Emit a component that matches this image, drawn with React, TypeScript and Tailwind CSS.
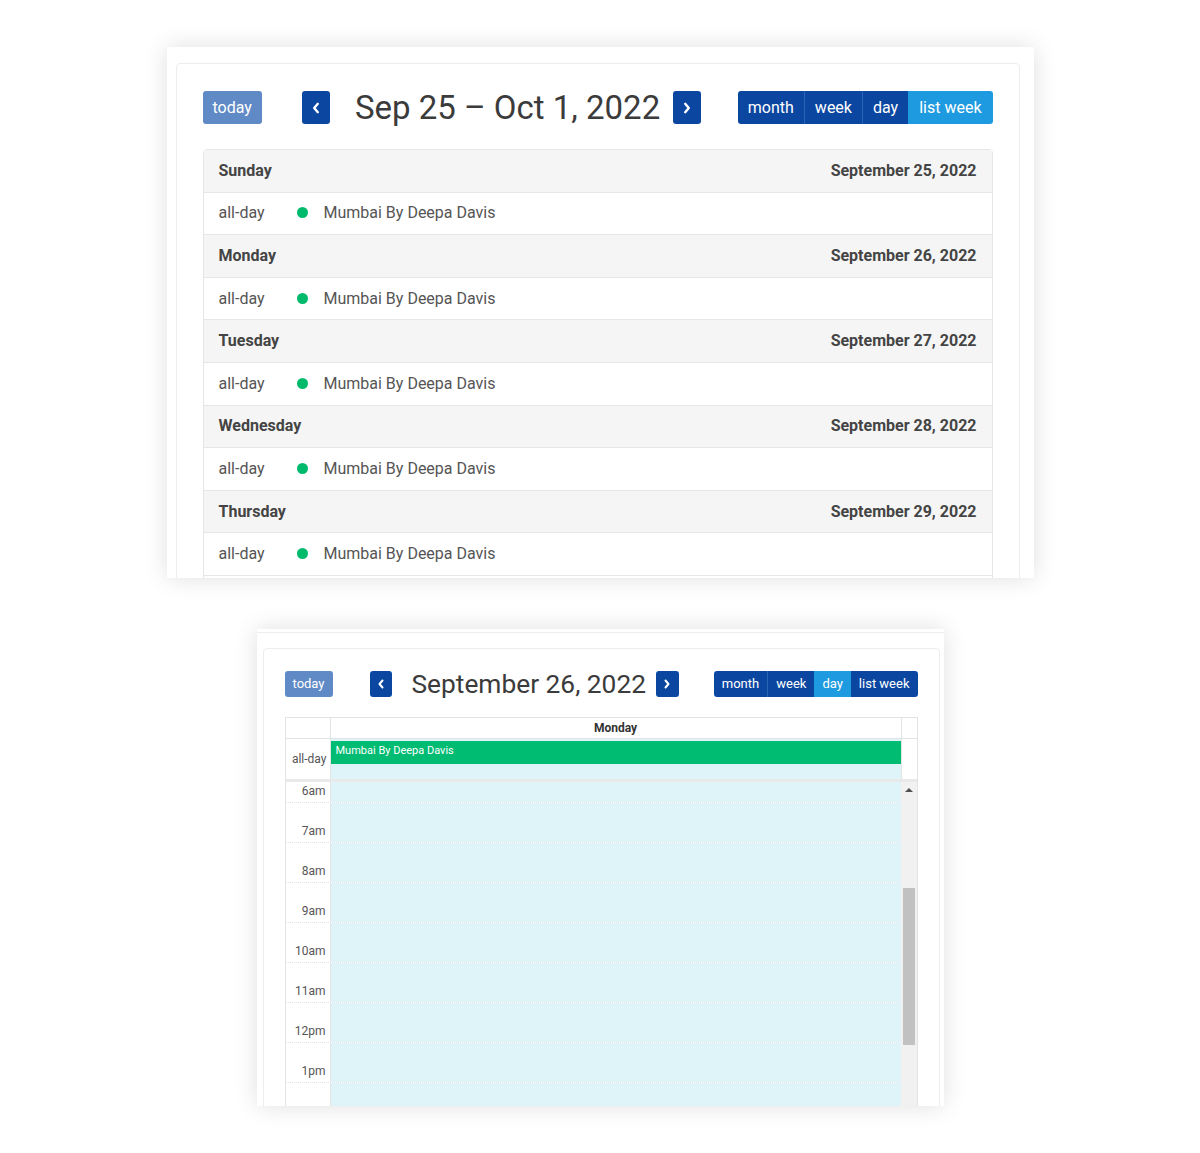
import React from "react";

const days = [
  { name: "Sunday", date: "September 25, 2022" },
  { name: "Monday", date: "September 26, 2022" },
  { name: "Tuesday", date: "September 27, 2022" },
  { name: "Wednesday", date: "September 28, 2022" },
  { name: "Thursday", date: "September 29, 2022" },
];

const hours = ["6am", "7am", "8am", "9am", "10am", "11am", "12pm", "1pm", ""];

function Chevron({ dir, size }: { dir: "left" | "right"; size: number }) {
  return (
    <svg width={size} height={size} viewBox="0 0 10 10" fill="none" stroke="white" strokeWidth="2" strokeLinecap="round" strokeLinejoin="round">
      {dir === "left" ? <polyline points="6.5,1.5 3.5,5 6.5,8.5" /> : <polyline points="3.5,1.5 6.5,5 3.5,8.5" />}
    </svg>
  );
}

function ListWeekCard() {
  return (
    <div className="w-[867px] h-[531px] bg-white shadow-[0_0_22px_rgba(0,0,0,0.13)] overflow-hidden pt-[16px] pl-[9px] pr-[14px]">
      <div className="h-[540px] border border-[#ededed] rounded-[4px] px-[26px] pt-[27px]">
        {/* toolbar */}
        <div className="flex items-center h-[33px]">
          <button className="h-[33px] px-[10px] rounded-[3px] bg-[#5f8ac6] text-white text-[16px]">today</button>
          <button className="ml-[40px] w-[28px] h-[33px] rounded-[3px] bg-[#0b47a1] flex items-center justify-center">
            <Chevron dir="left" size={12} />
          </button>
          <h2 className="ml-[25px] text-[33px] leading-none text-[#3b3b3b]">Sep 25 – Oct 1, 2022</h2>
          <button className="ml-[13px] w-[28px] h-[33px] rounded-[3px] bg-[#0b47a1] flex items-center justify-center">
            <Chevron dir="right" size={12} />
          </button>
          <div className="ml-auto flex h-[33px] rounded-[3px] overflow-hidden text-white text-[16px]">
            <span className="px-[10px] flex items-center bg-[#0b47a1]">month</span>
            <span className="px-[10px] flex items-center bg-[#0b47a1] border-l border-[#2a62b5]">week</span>
            <span className="px-[10px] flex items-center bg-[#0b47a1] border-l border-[#2a62b5]">day</span>
            <span className="px-[11px] flex items-center bg-[#1e9be0]">list week</span>
          </div>
        </div>

        {/* list */}
        <div className="mt-[25px] h-[500px] border border-[#e6e6e6] rounded-t-[4px] text-[#444] text-[16px]">
          {days.map((d) => (
            <div key={d.name}>
              <div className="h-[42.6px] bg-[#f5f5f5] border-b border-[#e6e6e6] flex items-center justify-between px-[15px] font-bold">
                <span>{d.name}</span>
                <span>{d.date}</span>
              </div>
              <div className="h-[42.6px] border-b border-[#e6e6e6] flex items-center px-[15px] text-[#555]">
                <span className="w-[78px]">all-day</span>
                <span className="w-[11px] h-[11px] rounded-full bg-[#00ba6c] -mt-[1px]" />
                <span className="ml-[16px]">Mumbai By Deepa Davis</span>
              </div>
            </div>
          ))}
        </div>
      </div>
    </div>
  );
}

function DayCard() {
  return (
    <div className="w-[687px] h-[477px] bg-white shadow-[0_0_22px_rgba(0,0,0,0.13)] overflow-hidden pt-[3px]">
      <div className="border-t border-[#eeeeee] pt-[15px] pl-[6px] pr-[4px]">
        <div className="border border-[#ededed] rounded-[4px] px-[21px] pt-[22px]">
          {/* toolbar */}
          <div className="flex items-center h-[26px]">
            <button className="h-[26px] px-[8px] rounded-[3px] bg-[#5f8ac6] text-white text-[13px]">today</button>
            <button className="ml-[37px] w-[22px] h-[26px] rounded-[3px] bg-[#0b47a1] flex items-center justify-center">
              <Chevron dir="left" size={10} />
            </button>
            <h2 className="ml-[20px] text-[26.3px] leading-none text-[#3b3b3b]">September 26, 2022</h2>
            <button className="ml-[10px] w-[23px] h-[26px] rounded-[3px] bg-[#0b47a1] flex items-center justify-center">
              <Chevron dir="right" size={10} />
            </button>
            <div className="ml-auto flex h-[26px] rounded-[3px] overflow-hidden text-white text-[13px]">
              <span className="px-[8px] flex items-center bg-[#0b47a1]">month</span>
              <span className="px-[8px] flex items-center bg-[#0b47a1] border-l border-[#2a62b5]">week</span>
              <span className="px-[8px] flex items-center bg-[#1e9be0]">day</span>
              <span className="px-[8px] flex items-center bg-[#0b47a1]">list week</span>
            </div>
          </div>

          {/* grid */}
          <div className="mt-[20px] border border-[#e3e3e3] text-[12px] text-[#555]">
            <div className="flex h-[21px] border-b border-[#e3e3e3]">
              <div className="w-[45px] border-r border-[#e3e3e3]" />
              <div className="flex-1 flex items-center justify-center font-bold text-[#333]">Monday</div>
              <div className="w-[16px] border-l border-[#e3e3e3]" />
            </div>
            <div className="flex h-[40px]">
              <div className="w-[45px] border-r border-[#e3e3e3] flex items-center justify-end pr-[3px]">all-day</div>
              <div className="flex-1 bg-[#dff4f8] pt-[2px]">
                <div className="h-[23px] bg-[#00bb72] text-white text-[11px] px-[5px] pt-[3px] leading-[14px]">Mumbai By Deepa Davis</div>
              </div>
              <div className="w-[16px] border-l border-[#e3e3e3]" />
            </div>
            <div className="h-[3px] bg-[#e9e9e9]" />
            <div className="flex">
              <div className="flex-1 flex flex-col">
                {hours.map((h, i) => (
                  <div key={i}>
                    <div className="flex h-[20px] border-t border-[#e2e2e2] first:border-t-0">
                      <div className="w-[45px] border-r border-[#e3e3e3] text-right pr-[4px] leading-[18px]">{h}</div>
                      <div className="flex-1 bg-[#dff4f8]" />
                    </div>
                    <div className="flex h-[20px] border-t border-dotted border-[#e2e2e2]">
                      <div className="w-[45px] border-r border-[#e3e3e3]" />
                      <div className="flex-1 bg-[#dff4f8]" />
                    </div>
                  </div>
                ))}
              </div>
              <div className="w-[16px] bg-[#f1f1f1] flex flex-col items-center">
                <div className="mt-[6px] w-0 h-0 border-l-[4px] border-r-[4px] border-b-[4px] border-l-transparent border-r-transparent border-b-[#505050]" />
                <div className="mt-[96px] w-[12px] h-[157px] bg-[#c1c1c1]" />
              </div>
            </div>
          </div>
        </div>
      </div>
    </div>
  );
}

export default function App() {
  return (
    <div className="w-[1200px] h-[1153px] bg-white flex flex-col items-center pt-[47px] font-['Roboto',sans-serif]">
      <ListWeekCard />
      <div className="mt-[51px]">
        <DayCard />
      </div>
    </div>
  );
}
